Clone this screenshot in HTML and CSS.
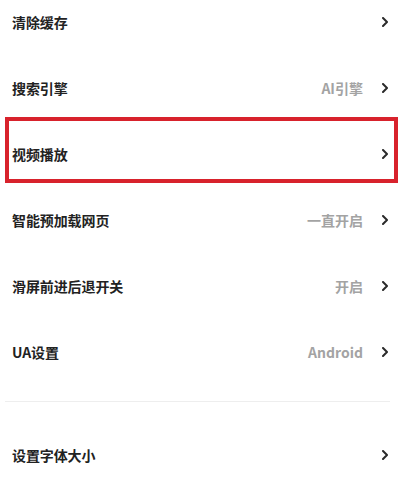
FILE: index.html
```
<!DOCTYPE html>
<html lang="zh-CN">
<head>
<meta charset="utf-8">
<link rel="stylesheet" href="styles.css">
</head>
<body>
<div class="page">
  <div class="group first">
    <div class="row"><span class="label">清除缓存</span><span class="right"><svg class="chev" viewBox="0 0 6 10" width="6" height="10"><polyline points="1,1 5,5 1,9"/></svg></span></div>
    <div class="row"><span class="label">搜索引擎</span><span class="right"><span class="value">AI引擎</span><svg class="chev" viewBox="0 0 6 10" width="6" height="10"><polyline points="1,1 5,5 1,9"/></svg></span></div>
    <div class="row highlighted"><span class="label">视频播放</span><span class="right"><svg class="chev" viewBox="0 0 6 10" width="6" height="10"><polyline points="1,1 5,5 1,9"/></svg></span><span class="mark"></span></div>
    <div class="row"><span class="label">智能预加载网页</span><span class="right"><span class="value">一直开启</span><svg class="chev" viewBox="0 0 6 10" width="6" height="10"><polyline points="1,1 5,5 1,9"/></svg></span></div>
    <div class="row"><span class="label">滑屏前进后退开关</span><span class="right"><span class="value">开启</span><svg class="chev" viewBox="0 0 6 10" width="6" height="10"><polyline points="1,1 5,5 1,9"/></svg></span></div>
    <div class="row"><span class="label">UA设置</span><span class="right"><span class="value">Android</span><svg class="chev" viewBox="0 0 6 10" width="6" height="10"><polyline points="1,1 5,5 1,9"/></svg></span></div>
  </div>
  <div class="divider"></div>
  <div class="group">
    <div class="row"><span class="label">设置字体大小</span><span class="right"><svg class="chev" viewBox="0 0 6 10" width="6" height="10"><polyline points="1,1 5,5 1,9"/></svg></span></div>
  </div>
</div>
</body>
</html>
```
FILE: styles.css
```
html, body {
  margin: 0;
  padding: 0;
  background: #ffffff;
}
body {
  font-family: "Noto Sans CJK SC", "Noto Sans", sans-serif;
  overflow: hidden;
}
.page {
  width: 400px;
}
.group.first {
  margin-top: -11px;
}
.row {
  position: relative;
  height: 66px;
  display: flex;
  align-items: center;
  justify-content: space-between;
  padding: 0 12px;
}
.label {
  font-size: 14px;
  font-weight: 700;
  color: #222222;
  letter-spacing: -0.1px;
}
.right {
  display: flex;
  align-items: center;
  gap: 19px;
}
.value {
  font-size: 14px;
  font-weight: 700;
  color: #a3a3a3;
}
.chev {
  display: block;
  fill: none;
  stroke: #2a2a2a;
  stroke-width: 2;
  stroke-linecap: round;
  stroke-linejoin: round;
}
.mark {
  position: absolute;
  top: -4px;
  bottom: 4px;
  left: 5px;
  right: 2px;
  border: 4px solid #d8222c;
}
.divider {
  height: 1px;
  background: #eeeeee;
  margin: 16px 10px 20px 5px;
}
```
